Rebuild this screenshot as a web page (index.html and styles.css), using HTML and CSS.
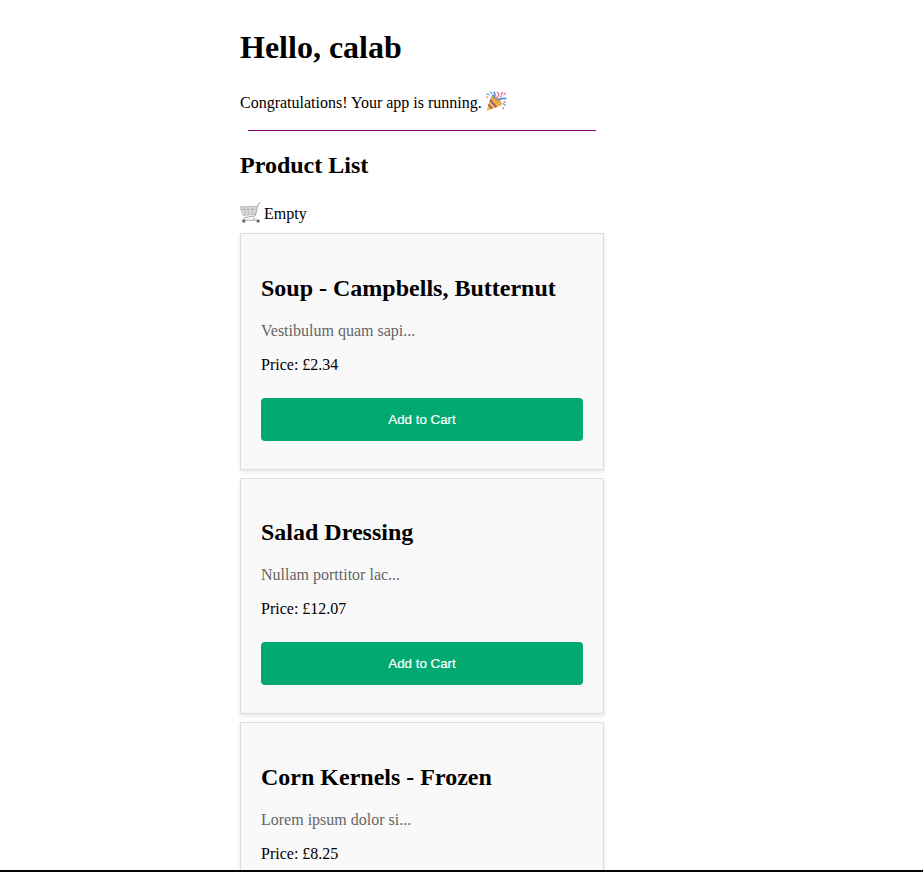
FILE: index.html
```html
<!DOCTYPE html>
<html lang="en">
<head>
<meta charset="utf-8">
<title>Product List</title>
<link rel="stylesheet" href="styles.css">
</head>
<body>
<main class="page">
  <h1 class="title">Hello, calab</h1>
  <p class="intro">Congratulations! Your app is running.
    <svg class="icon party" viewBox="0 0 22 22" aria-hidden="true">
      <path d="M6 5 1 21 17 15Q15 7 6 5Z" fill="#f5bd3d"/>
      <path d="M5 8 12.500 16.400 10.300 17.300 4.200 10.500ZM3.300 13 7.800 18 5.800 18.900 2.600 15.300Z" fill="#a0568f"/>
      <ellipse cx="11.500" cy="9.800" rx="3" ry="7" transform="rotate(-48 11.500 9.800)" fill="#f0ae3c"/>
      <path d="M8 8Q11 5 9 1M12 10Q16 7 22 8" fill="none" stroke="#4a94d8" stroke-width="1.700"/>
      <path d="M10 9Q13 7 14 3" fill="none" stroke="#d7708d" stroke-width="1.300"/>
      <path d="M1 3 4 4M5 1 7 3M18 13 21 15" stroke="#6aa8df" stroke-width="1.500"/>
      <path d="M12 1 14 3M16 4 18 1M19 4 21 2M18 17 19 19M3 7 1 6" stroke="#e4708b" stroke-width="1.400"/>
      <path d="M15 6 17 5M19 11 21 12M7 4 9 5" stroke="#b46abd" stroke-width="1.400"/>
    </svg>
  </p>
  <hr class="rule">
  <h2 class="section">Product List</h2>
  <div class="cart">
    <svg class="icon trolley" viewBox="0 0 22 22" aria-hidden="true">
      <path d="M0 5 18 4.500 16.500 13 3 14Z" fill="#dadada"/>
      <path d="M0 5 18 4.500M1 8 17 7.500M3 14 16 13M0 5 3 14M4 5 6 14M8 5 9 13.500M13 4.500 13 13" fill="none" stroke="#b0b0b0" stroke-width=".8"/>
      <path d="M21.500 1 19 2 16 14.500 5 16.500 2.500 19H19" fill="none" stroke="#a0a0a0" stroke-width="1"/>
      <circle cx="4" cy="20" r="1.700" fill="#6d6262"/>
      <circle cx="19" cy="20" r="1.700" fill="#6d6262"/>
      <circle cx="14.500" cy="17.300" r=".8" fill="#9b9292"/>
    </svg>
    Empty</div>
  <section class="products">
    <article class="card">
      <h2 class="name">Soup - Campbells, Butternut</h2>
      <p class="description">Vestibulum quam sapi...</p>
      <p class="price">Price: £2.34</p>
      <button class="add">Add to Cart</button>
    </article>
    <article class="card">
      <h2 class="name">Salad Dressing</h2>
      <p class="description">Nullam porttitor lac...</p>
      <p class="price">Price: £12.07</p>
      <button class="add">Add to Cart</button>
    </article>
    <article class="card last">
      <h2 class="name">Corn Kernels - Frozen</h2>
      <p class="description">Lorem ipsum dolor si...</p>
      <p class="price">Price: £8.25</p>
    </article>
  </section>
</main>
</body>
</html>
```
FILE: styles.css
```css
* {
  box-sizing: border-box;
}

body {
  margin: 0;
  height: 872px;
  overflow: hidden;
  border-bottom: 2px solid #05050d;
  background: #fff;
  color: #000;
  font: 16px/18px "Liberation Serif", "Times New Roman", serif;
}

.page {
  display: flow-root;
  width: 364px;
  height: 870px;
  margin-left: 240px;
}

.title {
  margin: 29px 0 0;
  font-size: 32px;
  line-height: 37px;
}

.intro {
  height: 22px;
  margin: 25px 0 0;
  line-height: 24px;
  white-space: nowrap;
}

.icon {
  display: inline-block;
  width: 21px;
  height: 21px;
  vertical-align: -4px;
}

.party {
  width: 22px;
  margin-left: -1px;
}

.trolley {
  margin-right: -1px;
}

.rule {
  height: 1px;
  margin: 17px 8px 0;
  border: 0;
  background: purple;
}

.section {
  margin: 21px 0 0;
  font-size: 24px;
  line-height: 27px;
}

.cart {
  height: 24px;
  margin-top: 23px;
  line-height: 24px;
}

.products {
  display: grid;
  gap: 8px;
  margin-top: 7.400px;
}

.card {
  height: 236.500px;
  padding: 40.150px 20px 28px;
  border: 1px solid #ddd;
  background: #f9f9f9;
  box-shadow: 0 2px 4px rgba(0, 0, 0, .1);
}

.last {
  height: 147.600px;
  padding-bottom: 0;
  border-bottom: 0;
}

.name {
  margin: 0;
  font-size: 24px;
  line-height: 27px;
}

.description {
  margin: 20.250px 0 16px;
  color: #666;
}

.price {
  margin: 0 0 24px;
}

.last .price {
  margin-bottom: 0;
}

.add {
  display: block;
  width: 100%;
  height: 43px;
  padding: 0;
  border: 0;
  border-radius: 4px;
  background: #02a971;
  color: #fff;
  font: 13.333px "Liberation Sans", Arial, sans-serif;
  -webkit-text-stroke: .2px #fff;
}
```
